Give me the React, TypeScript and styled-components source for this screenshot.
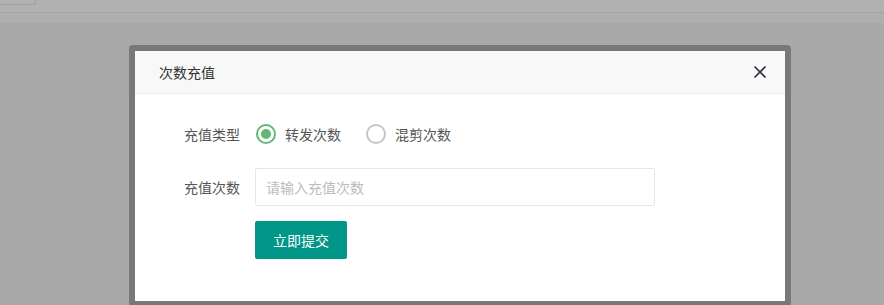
import { useState } from "react";
import styled, { createGlobalStyle } from "styled-components";

const GlobalStyle = createGlobalStyle`
    html, body {
        margin: 0;
        padding: 0;
        background: #a9a9a9;
        font-family: "Noto Sans CJK SC", "Noto Sans", sans-serif;
    }
`;

const Page = styled.div`
    width: 884px;
    height: 305px;
    overflow: hidden;
    background: #a9a9a9;
`;

const TopStrip = styled.div`
    height: 12px;
    background: #b1b1b1;
    border-bottom: 1px solid #a3a3a3;
    .tab {
        width: 35px;
        height: 4px;
        border: 1px solid #9c9c9c;
        border-top: none;
        border-left: none;
        border-radius: 0 0 2px 0;
    }
`;

const SubStrip = styled.div`
    height: 10px;
    background: #afafaf;
`;

const Stage = styled.div`
    padding: 22px 0 0 129px;
`;

const Dialog = styled.div`
    width: 650px;
    border: 6px solid #787878;
    border-radius: 4px;
    background: #fff;
`;

const Header = styled.div`
    height: 42px;
    background: #f8f8f8;
    border-bottom: 1px solid #eee;
    display: flex;
    align-items: center;
    justify-content: space-between;
    padding: 0 18px 0 24px;
    font-size: 14px;
    color: #333;
`;

const CloseButton = styled.button`
    border: none;
    background: none;
    padding: 0;
    width: 14px;
    height: 14px;
    display: flex;
    cursor: pointer;
`;

const Body = styled.div`
    padding: 21px 20px 42px;
    display: flex;
    flex-direction: column;
    gap: 15px;
`;

const Row = styled.div`
    display: flex;
    align-items: center;
    min-height: 38px;
`;

const Label = styled.label`
    width: 85px;
    padding-right: 15px;
    text-align: right;
    font-size: 14px;
    color: #555;
    flex-shrink: 0;
`;

const RadioGroup = styled.div`
    display: flex;
    align-items: center;
    gap: 24px;
`;

const RadioItem = styled.div`
    display: flex;
    align-items: center;
    gap: 9px;
    font-size: 14px;
    color: #555;
    cursor: pointer;
`;

const RadioCircle = styled.span<{ $checked: boolean }>`
    width: 16px;
    height: 16px;
    border-radius: 50%;
    border: 2px solid ${(p) => (p.$checked ? "#5fb878" : "#c6c6c6")};
    display: flex;
    align-items: center;
    justify-content: center;
    margin-left: 1px;
    &::after {
        content: "";
        width: 10px;
        height: 10px;
        border-radius: 50%;
        background: #5fb878;
        display: ${(p) => (p.$checked ? "block" : "none")};
    }
`;

const TextInput = styled.input`
    width: 400px;
    height: 38px;
    box-sizing: border-box;
    border: 1px solid #e6e6e6;
    border-radius: 2px;
    padding: 0 10px;
    font-size: 14px;
    font-family: inherit;
    color: #333;
    outline: none;
    &::placeholder {
        color: #bbb;
    }
`;

const SubmitButton = styled.button`
    margin-left: 100px;
    width: 92px;
    height: 38px;
    border: none;
    border-radius: 2px;
    background: #009688;
    color: #fff;
    font-size: 14px;
    font-family: inherit;
    cursor: pointer;
    align-self: flex-start;
`;

export default function App() {
    const [kind, setKind] = useState("forward");

    return (
        <Page>
            <GlobalStyle />
            <TopStrip><div className="tab" /></TopStrip>
            <SubStrip />
            <Stage>
                <Dialog>
                    <Header>
                        <span>次数充值</span>
                        <CloseButton aria-label="关闭">
                            <svg width="14" height="14" viewBox="0 0 14 14">
                                <path d="M1.5 1.5 L12.5 12.5 M12.5 1.5 L1.5 12.5" stroke="#2e2e3a" strokeWidth="1.6" />
                            </svg>
                        </CloseButton>
                    </Header>
                    <Body>
                        <Row>
                            <Label>充值类型</Label>
                            <RadioGroup>
                                <RadioItem onClick={() => setKind("forward")}>
                                    <RadioCircle $checked={kind === "forward"} />
                                    转发次数
                                </RadioItem>
                                <RadioItem onClick={() => setKind("mix")}>
                                    <RadioCircle $checked={kind === "mix"} />
                                    混剪次数
                                </RadioItem>
                            </RadioGroup>
                        </Row>
                        <Row>
                            <Label>充值次数</Label>
                            <TextInput placeholder="请输入充值次数" />
                        </Row>
                        <SubmitButton>立即提交</SubmitButton>
                    </Body>
                </Dialog>
            </Stage>
        </Page>
    );
}
